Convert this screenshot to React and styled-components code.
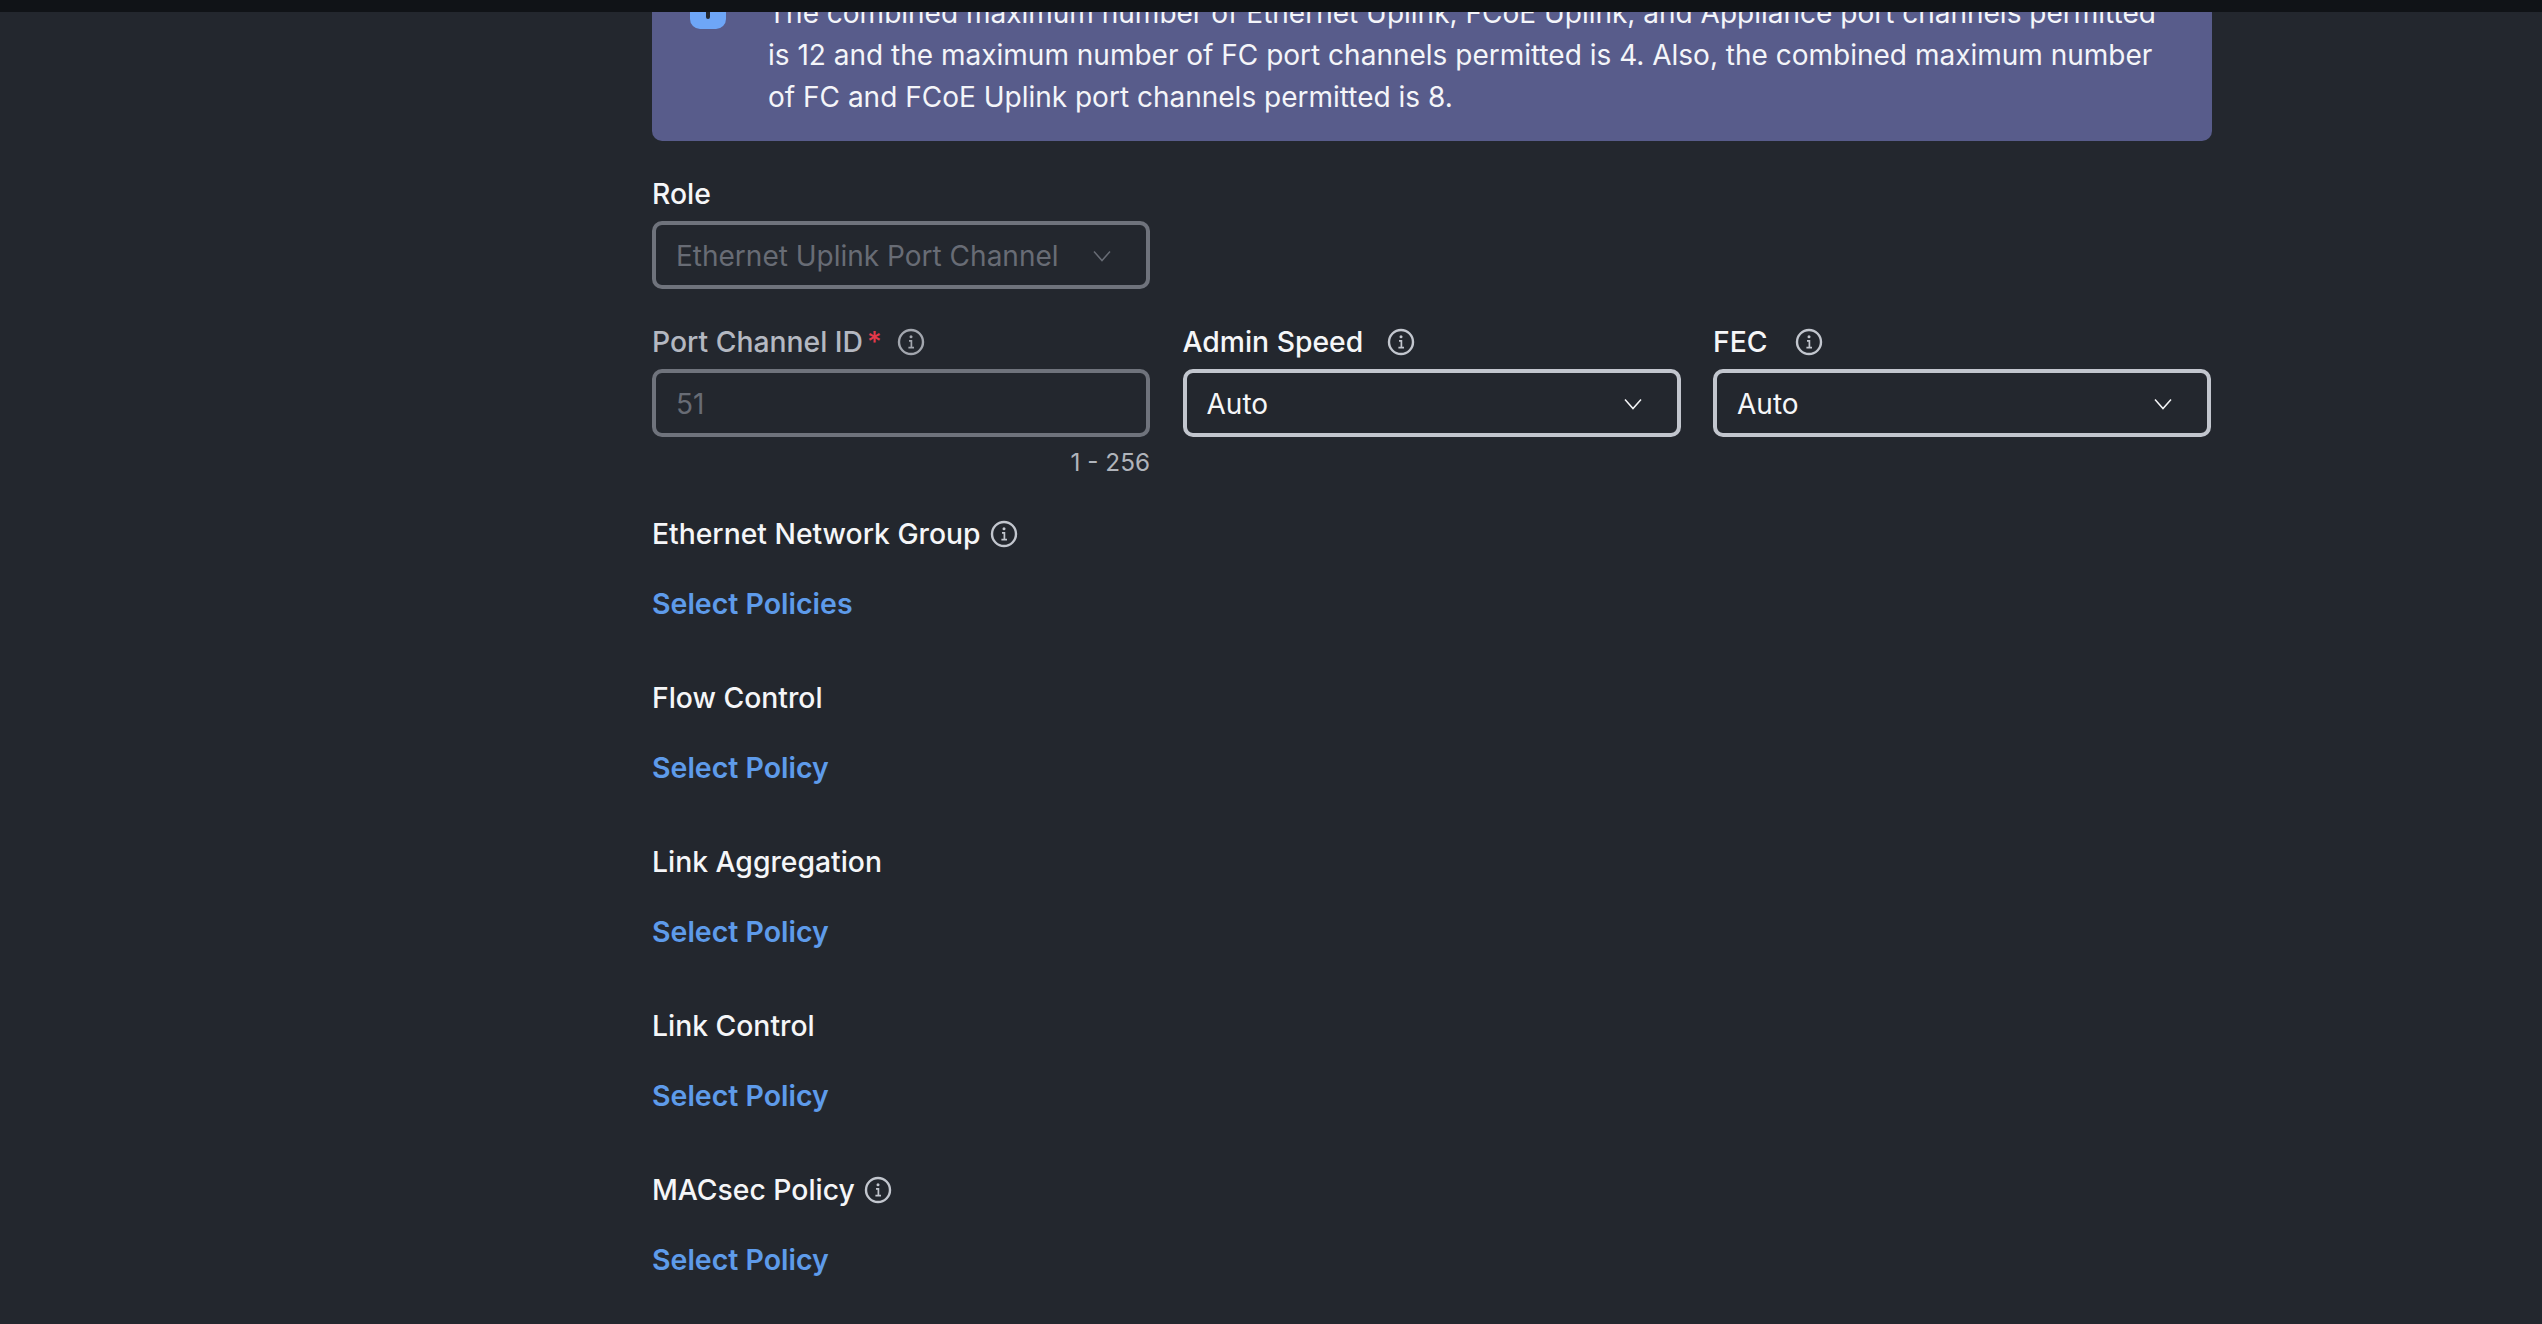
import React from 'react';
import styled, { createGlobalStyle } from 'styled-components';

const GlobalStyle = createGlobalStyle`
  html, body {
    margin: 0;
    padding: 0;
    height: 100%;
    background: #23272e;
    overflow: hidden;
  }
  #root {
    height: 100%;
  }
`;

const Page = styled.div`
  height: 1324px;
  display: flex;
  flex-direction: column;
  background: #23272e;
  color: #f5f6f8;
  font-family: Inter, "Noto Sans", sans-serif;
  font-size: 28px;
  overflow: hidden;
`;

const TopBar = styled.div`
  flex: 0 0 12px;
  background: #101317;
`;

const Content = styled.main`
  flex: 1;
  overflow: hidden;
  padding-left: 652px;
  width: 1560px;
`;

const Banner = styled.div`
  margin: -44px 0 31px;
  padding: 24px 40px 23px 38px;
  display: flex;
  gap: 42px;
  background: #585c8b;
  border-radius: 0 0 10px 10px;
  line-height: 42px;
  color: #f4f5f9;
`;

const BannerIcon = styled.div`
  flex: 0 0 36px;
  height: 36px;
  margin-top: 1px;
  border-radius: 10px;
  background: #6ea6f7;
  display: flex;
  align-items: flex-end;
  justify-content: center;
  padding-bottom: 10px;
  box-sizing: border-box;

  &::after {
    content: '';
    width: 4px;
    height: 14px;
    border-radius: 2px;
    background: #23272e;
  }
`;

const Row = styled.div`
  display: grid;
  grid-template-columns: repeat(3, 498px);
  gap: 32.5px;
  margin-top: ${(p) => p.$top || 0}px;
`;

const Field = styled.div`
  display: flex;
  flex-direction: column;
`;

const LabelRow = styled.div`
  box-sizing: border-box;
  display: flex;
  align-items: center;
  height: 42px;
  padding-top: 2px;
  margin-bottom: 7px;
  gap: ${(p) => p.$gap || 9}px;
`;

const Label = styled.span`
  font-size: 28.3px;
  font-weight: 500;
  color: ${(p) => (p.$muted ? '#b4b8c1' : '#f5f6f8')};
`;

const Required = styled.span`
  color: #e5394a;
  margin-left: 4px;
`;

const InputBox = styled.div`
  box-sizing: border-box;
  height: 68px;
  padding: 1px 35px 0 20px;
  display: flex;
  align-items: center;
  justify-content: space-between;
  border: 4px solid ${(p) => (p.$disabled ? '#6f737c' : '#c2c6ce')};
  border-radius: 10px;
  color: ${(p) => (p.$disabled ? '#686c75' : '#f5f6f8')};
`;

const Helper = styled.div`
  margin-top: 8px;
  height: 34px;
  line-height: 34px;
  font-size: 24.3px;
  text-align: right;
  color: #b0b4bb;
`;

const PolicyGroup = styled.section`
  margin-top: ${(p) => p.$top || 51}px;
`;

const PolicyLabel = styled(LabelRow)`
  margin-bottom: 29px;
`;

const PolicyLink = styled.a`
  display: block;
  height: 42px;
  line-height: 42px;
  font-size: 28.5px;
  font-weight: 600;
  color: #5e9bea;
`;

const InfoSvg = styled.svg`
  flex: none;
  width: 28px;
  height: 28px;
  color: #c2c6ce;
  opacity: ${(p) => (p.$muted ? 0.8 : 1)};
`;

const ChevronSvg = styled.svg`
  flex: none;
  width: 18px;
  height: 12px;
`;

const InfoIcon = ({ muted }) => (
  <InfoSvg $muted={muted} viewBox="0 0 28 28" fill="none" stroke="currentColor">
    <circle cx="14" cy="14" r="12" strokeWidth="2.4" />
    <path d="M12 12.8h2.4v6.6M11.4 19.6h5.6" strokeWidth="1.7" />
    <circle cx="14" cy="8.8" r="1.5" fill="currentColor" stroke="none" />
  </InfoSvg>
);

const Chevron = () => (
  <ChevronSvg viewBox="0 0 18 12" fill="none" stroke="currentColor" strokeWidth="1.5">
    <path d="M1 1.5l8 9 8-9" />
  </ChevronSvg>
);

const policies = [
  { label: 'Ethernet Network Group', link: 'Select Policies', info: true, top: 33 },
  { label: 'Flow Control', link: 'Select Policy' },
  { label: 'Link Aggregation', link: 'Select Policy' },
  { label: 'Link Control', link: 'Select Policy' },
  { label: 'MACsec Policy', link: 'Select Policy', info: true },
];

const App = () => (
  <Page>
    <GlobalStyle />
    <TopBar />
    <Content>
      <Banner>
        <BannerIcon />
        <div>
          The combined maximum number of Ethernet Uplink, FCoE Uplink, and Appliance port channels
          permitted is 12 and the maximum number of FC port channels permitted is 4. Also, the
          combined maximum number of FC and FCoE Uplink port channels permitted is 8.
        </div>
      </Banner>
      <Row>
        <Field>
          <LabelRow>
            <Label>Role</Label>
          </LabelRow>
          <InputBox $disabled>
            Ethernet Uplink Port Channel
            <Chevron />
          </InputBox>
        </Field>
      </Row>
      <Row $top={31}>
        <Field>
          <LabelRow $gap={15}>
            <Label $muted>
              Port Channel ID
              <Required>*</Required>
            </Label>
            <InfoIcon muted />
          </LabelRow>
          <InputBox $disabled>51</InputBox>
          <Helper>1 - 256</Helper>
        </Field>
        <Field>
          <LabelRow $gap={24}>
            <Label>Admin Speed</Label>
            <InfoIcon />
          </LabelRow>
          <InputBox>
            Auto
            <Chevron />
          </InputBox>
        </Field>
        <Field>
          <LabelRow $gap={27}>
            <Label>FEC</Label>
            <InfoIcon />
          </LabelRow>
          <InputBox>
            Auto
            <Chevron />
          </InputBox>
        </Field>
      </Row>
      {policies.map((policy) => (
        <PolicyGroup key={policy.label} $top={policy.top}>
          <PolicyLabel>
            <Label>{policy.label}</Label>
            {policy.info && <InfoIcon />}
          </PolicyLabel>
          <PolicyLink>{policy.link}</PolicyLink>
        </PolicyGroup>
      ))}
    </Content>
  </Page>
);

export default App;
